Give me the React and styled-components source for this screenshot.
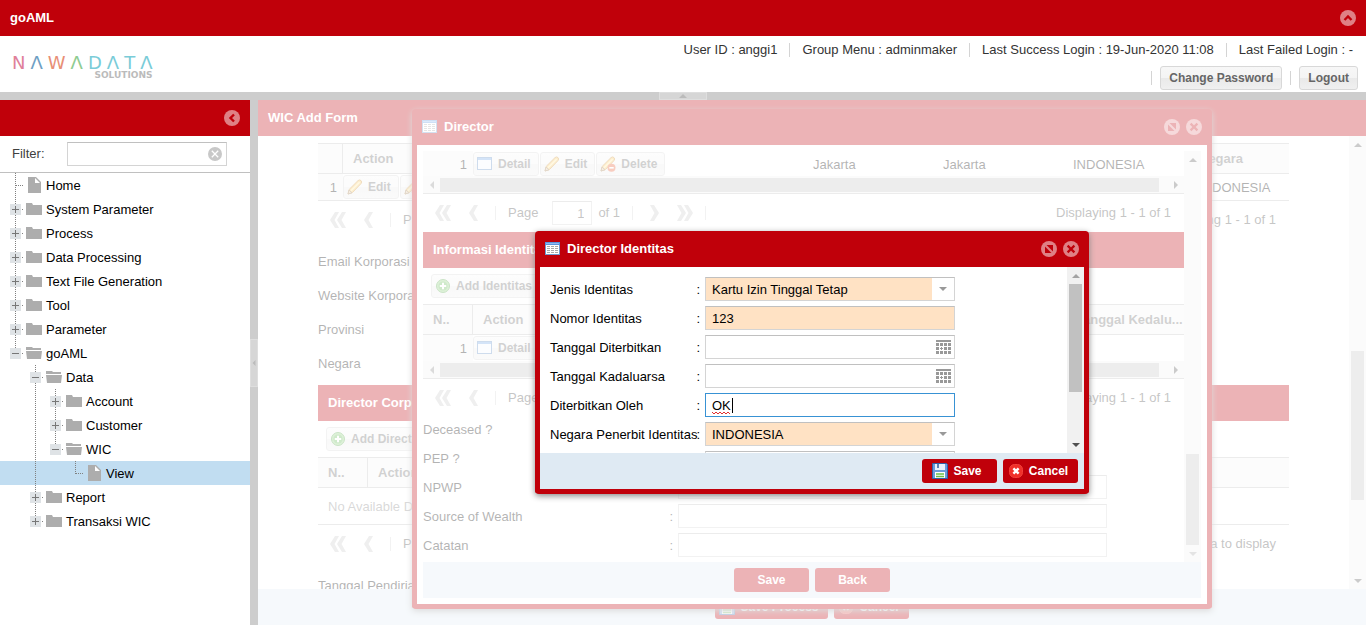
import React from "react";
import styled, { createGlobalStyle, css } from "styled-components";

const RED = "#c0000a";
const LINE = "#c0c0c0";

const GlobalStyle = createGlobalStyle`
  * { box-sizing: border-box; }
  html, body, #root { height: 100%; }
  body {
    margin: 0;
    background: #fff;
    color: #000;
    font: 13px/16px "Liberation Sans", Arial, sans-serif;
    overflow: hidden;
  }
  button, input, select { font: inherit; color: inherit; margin: 0; }
  h1, h2, h3 { margin: 0; font: bold 13px/16px "Liberation Sans", Arial, sans-serif; }
`;

/* ---------- frame ---------- */

const Page = styled.div`
  display: grid;
  grid-template-rows: 36px 56px 8px minmax(0, 1fr);
  height: 100vh;
`;

const TitleBar = styled.header`
  display: flex;
  align-items: center;
  gap: 6px;
  flex: 0 0 36px;
  height: 36px;
  padding: 0 10px;
  background: ${RED};
  color: #fff;
`;

const Title = styled.h2`
  flex: 1;
  color: #fff;
  white-space: nowrap;
`;

const ToolButton = styled.button`
  display: block;
  width: 16px;
  height: 16px;
  padding: 0;
  border: 0;
  background: none;
  svg { display: block; }
`;

const Banner = styled.div`
  display: flex;
  justify-content: space-between;
  background: #fff;
`;

const Logo = styled.div`
  display: flex;
  flex-direction: column;
  align-items: flex-end;
  padding: 19px 0 0 12px;
`;

const LogoWord = styled.div`
  display: flex;
  gap: 5px;
  font: 18px/16px "DejaVu Sans", sans-serif;
`;

const LogoLetter = styled.span`
  color: ${(p) => p.$color};
`;

const LogoSub = styled.div`
  color: #bbb;
  font: bold 9px/8px "DejaVu Sans", sans-serif;
`;

const Account = styled.div`
  display: flex;
  flex-direction: column;
  color: #333;
`;

const AccountLine = styled.div`
  display: flex;
  align-items: center;
  justify-content: flex-end;
  gap: ${(p) => p.$gap}px;
  height: 28px;
  padding-right: ${(p) => p.$end}px;
`;

const Rule = styled.span`
  width: 1px;
  height: 14px;
  background: #d4d4d4;
`;

const Splitter = styled.div`
  display: flex;
  align-items: center;
  justify-content: center;
  flex-direction: ${(p) => (p.$vertical ? "column" : "row")};
  background: #cdcdcd;
`;

const SplitHandle = styled.button`
  display: flex;
  align-items: center;
  justify-content: center;
  width: ${(p) => (p.$vertical ? 8 : 48)}px;
  height: ${(p) => (p.$vertical ? 48 : 8)}px;
  padding: 0;
  border: 1px solid #dedede;
  background: #d6d6d6;
`;

const Main = styled.div`
  display: grid;
  grid-template-columns: 250px 8px minmax(0, 1fr);
  grid-template-rows: minmax(0, 1fr);
`;

/* ---------- navigation ---------- */

const Sidebar = styled.nav`
  background: #fff;
  overflow: hidden;
`;

const FilterBar = styled.div`
  display: flex;
  align-items: center;
  height: 37px;
  padding: 0 12px;
  border-bottom: 1px solid ${LINE};
  color: #404040;
`;

const FilterLabel = styled.label`
  width: 55px;
`;

const FilterBox = styled.div`
  display: flex;
  align-items: center;
  width: 160px;
  height: 24px;
  padding-right: 4px;
  border: 1px solid #d4d4d4;
  border-top-color: ${LINE};
`;

const PlainInput = styled.input`
  flex: 1;
  min-width: 0;
  height: 100%;
  padding: 0 6px;
  border: 0;
  outline: 0;
  background: transparent;
`;

const TreeList = styled.ul`
  margin: 0;
  padding: 0;
  list-style: none;
`;

const TreeRow = styled.li`
  display: flex;
  align-items: center;
  height: 24px;
  padding-left: 5px;
  background: ${(p) => (p.$selected ? "#c1ddf1" : "transparent")};
  svg { flex: none; }
`;

const TreeLink = styled.a`
  margin-left: 4px;
  padding-top: 2px;
  color: #000;
  text-decoration: none;
  white-space: nowrap;
`;

const TreeIndent = styled.span`
  flex: none;
  width: 20px;
`;

const TreeIcon = styled.span`
  display: flex;
  margin-left: 1px;
`;

/* ---------- workspace ---------- */

const Workspace = styled.main`
  position: relative;
  display: flex;
  flex-direction: column;
  overflow: hidden;
`;

const ScrollPane = styled.div`
  display: flex;
  flex: 1;
  min-height: 0;
`;

const FormArea = styled.div`
  flex: 1;
  min-width: 0;
  overflow: hidden;
  padding: ${(p) => p.$pad || "0"};
`;

const FooterBar = styled.footer`
  display: flex;
  align-items: center;
  justify-content: ${(p) => (p.$end ? "flex-end" : "center")};
  gap: 6px;
  flex: 0 0 36px;
  padding: 0 6px;
  background: #dfeaf3;
`;

const Mask = styled.div`
  position: absolute;
  inset: 0;
  z-index: 2;
  background: rgba(255, 255, 255, 0.7);
`;

const ModalLayer = styled.div`
  position: absolute;
  inset: 0;
  z-index: ${(p) => p.$level};
  display: flex;
  align-items: ${(p) => (p.$centered ? "center" : "flex-start")};
  justify-content: center;
  padding-top: ${(p) => (p.$centered ? 0 : 9)}px;
`;

const Dialog = styled.section`
  display: flex;
  flex-direction: column;
  width: ${(p) => p.$width}px;
  max-width: 100%;
  height: ${(p) => p.$height}px;
  max-height: 100%;
  border: 5px solid ${RED};
  border-top: 0;
  border-radius: 4px;
  background: ${RED};
  box-shadow: 0 2px 6px #888;
  ${TitleBar} { padding: 0 5px; background: transparent; }
`;

const DialogBody = styled.div`
  display: flex;
  flex-direction: column;
  flex: 1;
  min-height: 0;
  padding: ${(p) => p.$pad}px;
  background: #fff;
`;

/* ---------- buttons ---------- */

const buttonBase = css`
  display: inline-flex;
  align-items: center;
  justify-content: center;
  gap: 5px;
  height: 24px;
  border-radius: 3px;
  font: bold 12px/16px "Liberation Sans", Arial, sans-serif;
  white-space: nowrap;
  svg { flex: none; }
`;

const ActionButton = styled.button`
  ${buttonBase}
  min-width: 75px;
  padding: ${(p) => (p.$icon ? "0 9px 0 4px" : "0 8px")};
  border: 0;
  background: ${RED};
  color: #fff;
`;

const GreyButton = styled.button`
  ${buttonBase}
  padding: ${(p) => (p.$icon ? "0 7px 0 3px" : "0 8px")};
  border: 1px solid #d8d8d8;
  background: linear-gradient(#f7f7f7, #f4f4f4 49%, #e9e9e9 50%, #f0f0f0);
  color: #666;
`;

/* ---------- grids ---------- */

const PanelTitle = styled.h3`
  height: 36px;
  margin-top: ${(p) => (p.$spaced ? 5 : 0)}px;
  padding: 10px;
  background: ${RED};
  color: #fff;
  line-height: 16px;
`;

const GridTools = styled.div`
  display: flex;
  align-items: center;
  height: 36px;
  padding: 0 8px;
`;

const Grid = styled.table`
  width: 100%;
  table-layout: fixed;
  border-collapse: separate;
  border-spacing: 0;
`;

const HeadCell = styled.th`
  height: 31px;
  padding: 0 0 0 10px;
  border-top: 1px solid ${LINE};
  border-bottom: 1px solid ${LINE};
  border-right: ${(p) => (p.$ruled ? "1px solid " + LINE : "0")};
  background: #f5f5f5;
  color: #666;
  text-align: left;
  white-space: nowrap;
  overflow: hidden;
`;

const Cell = styled.td`
  height: ${(p) => p.$height || 25}px;
  padding: ${(p) => (p.$flush ? "0" : "2px 0 0 10px")};
  border-bottom: ${(p) => (p.$closed ? "1px solid " + LINE : "0")};
  color: ${(p) => (p.$muted ? "#808080" : "#000")};
  white-space: nowrap;
`;

const NumberCell = styled(Cell)`
  padding: 2px 6px 0 0;
  background: #f6f6f6;
  text-align: right;
`;

const CellButtons = styled.div`
  display: flex;
  gap: 1px;
  overflow: hidden;
`;

const PagerBar = styled.div`
  display: flex;
  align-items: center;
  height: 38px;
  padding: 0 13px 0 12px;
  color: #404040;
  white-space: nowrap;
`;

const PagerButton = styled.button`
  display: flex;
  justify-content: center;
  width: ${(p) => (p.$wide ? 16 : 10)}px;
  padding: 0;
  border: 0;
  margin-right: ${(p) => p.$after}px;
  background: none;
`;

const PagerRule = styled(Rule)`
  margin-right: ${(p) => p.$after}px;
`;

const PageBox = styled.input`
  width: 40px;
  height: 24px;
  margin: 0 6px 0 14px;
  padding: 0 7px 0 0;
  border: 1px solid #d4d4d4;
  border-top-color: ${LINE};
  text-align: right;
`;

const PageCount = styled.span`
  width: 34px;
`;

const PagerInfo = styled.span`
  margin-left: auto;
`;

/* ---------- scroll bars ---------- */

const ScrollTrack = styled.div`
  display: flex;
  flex: none;
  align-items: stretch;
  background: #f1f1f1;
  ${(p) => (p.$across
    ? css`
        flex-direction: row;
        height: 18px;
        padding: 2px 0 1px;
        border-bottom: 1px solid ${LINE};
      `
    : css`
        flex-direction: column;
        width: 17px;
        padding: 0 2px;
      `)}
`;

const ScrollArrow = styled.span`
  flex: 0 0 17px;
  display: flex;
  align-items: center;
  justify-content: center;
`;

const ScrollGap = styled.span`
  flex: ${(p) => p.$share} 1 0;
`;

const ScrollThumb = styled.span`
  flex: ${(p) => p.$share} 1 0;
  background: #c1c1c1;
`;

/* ---------- form fields ---------- */

const TallLabel = styled.label`
  display: flex;
  align-items: center;
  height: 34px;
  padding-top: 2px;
`;

const LabelGroup = styled.div`
  margin-top: 5px;
`;

const FieldStack = styled.div`
  display: flex;
  flex-direction: column;
  gap: 5px;
`;

const FieldRow = styled.div`
  display: flex;
  gap: 5px;
  width: ${(p) => p.$width}px;
  max-width: 100%;
  height: 24px;
`;

const FieldLabel = styled.label`
  display: flex;
  align-items: center;
  justify-content: space-between;
  flex: 0 0 ${(p) => p.$width}px;
  min-width: 0;
  padding-top: 2px;
  white-space: nowrap;
`;

const LabelText = styled.span`
  min-width: 0;
`;

const CheckArea = styled.div`
  display: flex;
  align-items: center;
  flex: 1;
`;

const FieldBox = styled.div`
  position: relative;
  display: flex;
  align-items: center;
  flex: 1;
  min-width: 0;
  border: 1px solid ${(p) => (p.$focused ? "#3892d4" : "#d4d4d4")};
  border-top-color: ${(p) => (p.$focused ? "#3892d4" : LINE)};
  background: ${(p) => (p.$required ? "#ffe2c4" : "#fff")};
`;

const PlainSelect = styled.select`
  flex: 1;
  min-width: 0;
  height: 100%;
  padding: 2px 6px 0;
  border: 0;
  outline: 0;
  background: transparent;
  appearance: none;
`;

const Trigger = styled.span`
  display: flex;
  align-items: center;
  justify-content: center;
  width: 22px;
  height: 100%;
  background: #fff;
`;

const DateButton = styled.button`
  display: flex;
  align-items: center;
  justify-content: center;
  width: 22px;
  height: 100%;
  padding: 0;
  border: 0;
  background: #fff;
`;

const SpellMark = styled.svg`
  position: absolute;
  left: 6px;
  top: 3px;
  pointer-events: none;
`;

/* ---------- icons ---------- */

const CircleTool = ({ label, children }) => (
  <ToolButton type="button" aria-label={label}>
    <svg width="16" height="16" viewBox="0 0 16 16">
      <circle cx="8" cy="8" r="8" fill="#df8085" />
      {children}
    </svg>
  </ToolButton>
);

const CloseTool = () => (
  <CircleTool label="Close">
    <path d="M4.600 4.600l6.800 6.800M11.400 4.600l-6.800 6.800" stroke={RED} strokeWidth="2.200" />
  </CircleTool>
);

const MaximizeTool = () => (
  <CircleTool label="Maximize">
    <path d="M4 4h8v8h-8z" fill={RED} />
    <path d="M4 4l8 8" stroke="#df8085" strokeWidth="2.200" />
  </CircleTool>
);

const ChevronTool = ({ label, up }) => (
  <CircleTool label={label}>
    <path
      d={up ? "M4.500 10L8 6.500L11.500 10" : "M10 4.500L6.500 8L10 11.500"}
      fill="none"
      stroke={RED}
      strokeWidth="2.400"
    />
  </CircleTool>
);

const TableIcon = () => (
  <svg width="16" height="16" viewBox="0 0 16 16">
    <rect x="0.500" y="1.500" width="14" height="12" fill="#fff" stroke="#6f9bd0" />
    <rect x="0" y="1" width="15" height="3" fill="#5b93dc" />
    <rect x="1" y="2" width="13" height="1" fill="#8dbaf0" />
    <path
      d="M2 5.500h11M2 7.500h11M2 9.500h11M2 11.500h11"
      stroke="#a9a9a9"
      strokeDasharray="3 1"
    />
  </svg>
);

const WindowIcon = () => (
  <svg width="16" height="16" viewBox="0 0 16 16">
    <rect x="0.500" y="1.500" width="14" height="12" fill="#f4f8fd" stroke="#5b8bc4" />
    <rect x="1" y="2" width="13" height="2" fill="#6ea4e6" />
  </svg>
);

const PencilIcon = ({ remove }) => (
  <svg width="16" height="16" viewBox="0 0 16 16">
    <path d="M1 15l1.200-4.600L11 1.600q1.600-1.400 3 0t0 3L5.400 13.600z" fill="#f7c65a" stroke="#c98a2c" />
    <path d="M4 11.800L12.600 3.200" stroke="#ffeaa8" strokeWidth="1.400" />
    <path d="M1 15l1-4 3 2.800z" fill="#e7c9a0" stroke="#8a6a43" strokeWidth="0.800" />
    {remove && (
      <>
        <circle cx="11.500" cy="11.800" r="4" fill="#e8582e" />
        <path d="M9.300 11.800h4.400" stroke="#fff" strokeWidth="1.600" />
      </>
    )}
  </svg>
);

const AddIcon = () => (
  <svg width="16" height="16" viewBox="0 0 16 16">
    <circle cx="8" cy="8" r="6.500" fill="#8fd07e" stroke="#4fa343" />
    <circle cx="8" cy="8" r="4.600" fill="#5fb750" />
    <path d="M8 4.800v6.400M4.800 8h6.400" stroke="#fff" strokeWidth="2" />
  </svg>
);

const DiskIcon = () => (
  <svg width="16" height="16" viewBox="0 0 16 16">
    <path d="M0.500 0.500h14l1 1v14H0.500z" fill="#6c9bdc" stroke="#2f62a8" />
    <rect x="3" y="1" width="10" height="6" fill="#e9f1fb" />
    <rect x="5" y="1" width="2" height="4" fill="#5a7fb4" />
    <rect x="3" y="9" width="10" height="6" fill="#fff" />
    <path d="M4 11h8M4 13.500h8" stroke="#6cc04a" strokeWidth="1.600" />
  </svg>
);

const CancelIcon = () => (
  <svg width="16" height="16" viewBox="0 0 16 16">
    <rect x="1.500" y="1.500" width="13" height="13" rx="5" fill="#f0302a" stroke="#f4403a" />
    <path d="M5.400 5.400l5.200 5.200M10.600 5.400l-5.200 5.200" stroke="#fff" strokeWidth="2.400" />
  </svg>
);

const CalendarIcon = () => (
  <svg width="15" height="14" viewBox="0 0 15 14" fill="#999">
    <rect width="15" height="2" />
    {[3, 7, 11].map((y) =>
      [0, 4, 8, 12].map((x) => <rect key={x + "-" + y} x={x} y={y} width="3" height="3" />)
    )}
    <path d="M4 7h1v1H4zM6 7h1v1H6zM4 9h1v1H4zM6 9h1v1H6z" fill="#fff" />
  </svg>
);

const ClearIcon = () => (
  <svg width="14" height="14" viewBox="0 0 14 14">
    <circle cx="7" cy="7" r="7" fill="#c8c8c8" />
    <path d="M3.800 3.800l6.400 6.400M10.200 3.800l-6.400 6.400" stroke="#fff" strokeWidth="1.300" />
  </svg>
);

const arrowShapes = {
  up: "M0 6L4 2L8 6z",
  down: "M0 2L8 2L4 6z",
  left: "M6 0L2 4L6 8z",
  right: "M2 0L6 4L2 8z",
};

const Arrow = ({ way, color = "#999" }) => (
  <svg width="8" height="8" viewBox="0 0 8 8">
    <path d={arrowShapes[way]} fill={color} />
  </svg>
);

const PagerGlyph = ({ double, forward }) => {
  const width = double ? 16 : 10;
  return (
    <svg width={width} height="16" viewBox={`0 0 ${width} 16`}>
      <g transform={forward ? `translate(${width} 0) scale(-1 1)` : undefined} fill="#c8c8c8">
        <path d="M5 0h4L4.500 8L9 16H5L0 8z" />
        {double && <path d="M12 0h4L11.500 8L16 16H12L7 8z" />}
      </g>
    </svg>
  );
};

const FolderIcon = ({ open }) => (
  <svg width="16" height="16" viewBox="0 0 16 16" fill="#adadad">
    {open ? (
      <path d="M0 2h6l1 1h8v2H0zM0 6h16l-1 8H1z" />
    ) : (
      <path d="M0 2h6l1 2h9v10H0z" />
    )}
  </svg>
);

const FileIcon = () => (
  <svg width="16" height="16" viewBox="0 0 16 16">
    <path d="M2 0h8l5 5v11H2z" fill="#adadad" />
    <path d="M9 1v5h5z" fill="#fff" />
  </svg>
);

const Elbow = ({ mark, last, line }) => (
  <svg width="20" height="24" viewBox="0 0 20 24">
    <path d={last ? "M10.500 0V13" : "M10.500 0V24"} stroke="#808080" strokeDasharray="1 1" />
    {!line && <path d="M11 12.500H19" stroke="#808080" strokeDasharray="1 1" />}
    {mark && <rect x="5" y="7" width="11" height="11" fill="#dfe3e6" />}
    {mark && <path d="M7 12.500h7" stroke="#777" />}
    {mark === "plus" && <path d="M10.500 9v7" stroke="#777" />}
  </svg>
);

/* ---------- composed parts ---------- */

const logoLetters = [
  ["N", "#e0809a"], ["Λ", "#6f9fc4"], ["W", "#e88f76"], ["Λ", "#8fcc92"],
  ["D", "#7accd8"], ["Λ", "#7accd8"], ["T", "#7accd8"], ["Λ", "#7accd8"],
];

// trail: for each outer level, whether its connector line runs past this row
const treeNodes = [
  { name: "Home", file: true },
  { name: "System Parameter", mark: "plus" },
  { name: "Process", mark: "plus" },
  { name: "Data Processing", mark: "plus" },
  { name: "Text File Generation", mark: "plus" },
  { name: "Tool", mark: "plus" },
  { name: "Parameter", mark: "plus" },
  { name: "goAML", mark: "minus", last: true },
  { name: "Data", mark: "minus", trail: [false] },
  { name: "Account", mark: "plus", trail: [false, true] },
  { name: "Customer", mark: "plus", trail: [false, true] },
  { name: "WIC", mark: "minus", last: true, trail: [false, true] },
  { name: "View", file: true, last: true, selected: true, trail: [false, true, false] },
  { name: "Report", mark: "plus", trail: [false] },
  { name: "Transaksi WIC", mark: "plus", last: true, trail: [false] },
];

const TreeNode = ({ node }) => (
  <TreeRow $selected={node.selected}>
    {(node.trail || []).map((line, i) => (line ? <Elbow key={i} line /> : <TreeIndent key={i} />))}
    <Elbow mark={node.mark} last={node.last} />
    <TreeIcon>{node.file ? <FileIcon /> : <FolderIcon open={node.mark === "minus"} />}</TreeIcon>
    <TreeLink href="#">{node.name}</TreeLink>
  </TreeRow>
);

const ScrollBar = ({ across, before, thumb, after, startColor, endColor }) => (
  <ScrollTrack $across={across} aria-hidden="true">
    <ScrollArrow><Arrow way={across ? "left" : "up"} color={startColor} /></ScrollArrow>
    <ScrollGap $share={before} />
    <ScrollThumb $share={thumb} />
    <ScrollGap $share={after} />
    <ScrollArrow><Arrow way={across ? "right" : "down"} color={endColor} /></ScrollArrow>
  </ScrollTrack>
);

const Pager = ({ info }) => (
  <PagerBar>
    <PagerButton type="button" aria-label="First page" $wide $after={18}><PagerGlyph double /></PagerButton>
    <PagerButton type="button" aria-label="Previous page" $after={16}><PagerGlyph /></PagerButton>
    <PagerRule $after={12} />
    <span>Page</span>
    <PageBox aria-label="Page number" defaultValue="1" />
    <PageCount>of 1</PageCount>
    <PagerRule $after={16} />
    <PagerButton type="button" aria-label="Next page" $after={18}><PagerGlyph forward /></PagerButton>
    <PagerButton type="button" aria-label="Last page" $wide $after={12}><PagerGlyph double forward /></PagerButton>
    <Rule />
    <PagerInfo>{info}</PagerInfo>
  </PagerBar>
);

const RowButtons = ({ detail }) => (
  <CellButtons>
    {detail && <GreyButton type="button" $icon><WindowIcon />Detail</GreyButton>}
    <GreyButton type="button" $icon><PencilIcon />Edit</GreyButton>
    <GreyButton type="button" $icon><PencilIcon remove />Delete</GreyButton>
  </CellButtons>
);

const Field = ({ id, label, labelWidth, width, required, focused, check, children }) => (
  <FieldRow $width={width}>
    <FieldLabel htmlFor={id} $width={labelWidth}>
      <LabelText>{label}</LabelText>
      <span>:</span>
    </FieldLabel>
    {check
      ? <CheckArea>{children}</CheckArea>
      : <FieldBox $required={required} $focused={focused}>{children}</FieldBox>}
  </FieldRow>
);

const IdentityField = (props) => <Field labelWidth={150} width={405} {...props} />;
const DirectorField = (props) => <Field labelWidth={250} width={684} {...props} />;

const Combo = ({ id, value }) => (
  <>
    <PlainSelect id={id} defaultValue={value}><option>{value}</option></PlainSelect>
    <Trigger><Arrow way="down" /></Trigger>
  </>
);

const DateField = ({ id, label }) => (
  <IdentityField id={id} label={label}>
    <PlainInput id={id} />
    <DateButton type="button" aria-label={"Pick " + label}><CalendarIcon /></DateButton>
  </IdentityField>
);

const WicForm = () => (
  <>
    <TitleBar as="div"><Title>WIC Add Form</Title></TitleBar>
    <ScrollPane>
      <FormArea $pad="7px 60px 0">
        <Grid>
          <colgroup><col width="25" /><col /><col width="100" /></colgroup>
          <thead>
            <tr><HeadCell $ruled /><HeadCell>Action</HeadCell><HeadCell>Negara</HeadCell></tr>
          </thead>
          <tbody>
            <tr>
              <NumberCell $height={27} $closed>1</NumberCell>
              <Cell $height={27} $closed $flush><RowButtons /></Cell>
              <Cell $height={27} $closed>INDONESIA</Cell>
            </tr>
          </tbody>
        </Grid>
        <Pager info="Displaying 1 - 1 of 1" />
        <LabelGroup>
          {["Email Korporasi", "Website Korporasi", "Provinsi", "Negara"].map((t) => (
            <TallLabel key={t}>{t}</TallLabel>
          ))}
        </LabelGroup>
        <PanelTitle $spaced>Director Corp</PanelTitle>
        <GridTools>
          <GreyButton type="button" $icon><AddIcon />Add Director</GreyButton>
        </GridTools>
        <Grid>
          <colgroup><col width="50" /><col /></colgroup>
          <thead>
            <tr><HeadCell $ruled>N..</HeadCell><HeadCell>Action</HeadCell></tr>
          </thead>
          <tbody>
            <tr><Cell colSpan={2} $height={37} $closed $muted>No Available Data</Cell></tr>
          </tbody>
        </Grid>
        <Pager info="No data to display" />
        <LabelGroup><TallLabel>Tanggal Pendirian</TallLabel></LabelGroup>
      </FormArea>
      <ScrollBar before={198} thumb={149} after={72} startColor="#505050" endColor="#505050" />
    </ScrollPane>
    <FooterBar>
      <ActionButton type="button" $icon><DiskIcon />Save Process</ActionButton>
      <ActionButton type="button" $icon><CancelIcon />Cancel</ActionButton>
    </FooterBar>
  </>
);

const DirectorDialog = () => (
  <Dialog role="dialog" aria-label="Director" $width={800} $height={500}>
    <TitleBar as="div"><TableIcon /><Title>Director</Title><MaximizeTool /><CloseTool /></TitleBar>
    <DialogBody $pad={6}>
      <ScrollPane>
        <FormArea>
          <Grid>
            <colgroup><col width="50" /><col width="330" /><col width="130" /><col width="130" /><col /></colgroup>
            <tbody>
              <tr>
                <NumberCell>1</NumberCell>
                <Cell $flush><RowButtons detail /></Cell>
                <Cell>Jakarta</Cell>
                <Cell>Jakarta</Cell>
                <Cell>INDONESIA</Cell>
              </tr>
            </tbody>
          </Grid>
          <ScrollBar across before={0} thumb={719} after={8} startColor="#888" endColor="#505050" />
          <Pager info="Displaying 1 - 1 of 1" />
          <PanelTitle>Informasi Identitas</PanelTitle>
          <GridTools>
            <GreyButton type="button" $icon><AddIcon />Add Identitas</GreyButton>
          </GridTools>
          <Grid>
            <colgroup><col width="50" /><col /><col width="118" /></colgroup>
            <thead>
              <tr><HeadCell $ruled>N..</HeadCell><HeadCell>Action</HeadCell><HeadCell>Tanggal Kedalu...</HeadCell></tr>
            </thead>
            <tbody>
              <tr>
                <NumberCell $height={26}>1</NumberCell>
                <Cell $height={26} $flush><RowButtons detail /></Cell>
                <Cell $height={26} />
              </tr>
            </tbody>
          </Grid>
          <ScrollBar across before={0} thumb={719} after={8} startColor="#888" endColor="#505050" />
          <Pager info="Displaying 1 - 1 of 1" />
          <FieldStack>
            <DirectorField id="deceased" label="Deceased ?" check><input type="checkbox" id="deceased" /></DirectorField>
            <DirectorField id="pep" label="PEP ?" check><input type="checkbox" id="pep" /></DirectorField>
            <DirectorField id="npwp" label="NPWP"><PlainInput id="npwp" /></DirectorField>
            <DirectorField id="wealth" label="Source of Wealth"><PlainInput id="wealth" /></DirectorField>
            <DirectorField id="note" label="Catatan"><PlainInput id="note" /></DirectorField>
          </FieldStack>
        </FormArea>
        <ScrollBar before={286} thumb={91} after={0} startColor="#505050" endColor="#a3a3a3" />
      </ScrollPane>
      <FooterBar>
        <ActionButton type="button">Save</ActionButton>
        <ActionButton type="button">Back</ActionButton>
      </FooterBar>
    </DialogBody>
  </Dialog>
);

const IdentityDialog = () => (
  <Dialog role="dialog" aria-label="Director Identitas" $width={554} $height={263}>
    <TitleBar as="div"><TableIcon /><Title>Director Identitas</Title><MaximizeTool /><CloseTool /></TitleBar>
    <DialogBody $pad={0}>
      <ScrollPane>
        <FormArea $pad="10px 10px 0">
          <FieldStack>
            <IdentityField id="kind" label="Jenis Identitas" required>
              <Combo id="kind" value="Kartu Izin Tinggal Tetap" />
            </IdentityField>
            <IdentityField id="number" label="Nomor Identitas" required>
              <PlainInput id="number" defaultValue="123" />
            </IdentityField>
            <DateField id="issued" label="Tanggal Diterbitkan" />
            <DateField id="expires" label="Tanggal Kadaluarsa" />
            <IdentityField id="issuer" label="Diterbitkan Oleh" focused>
              <PlainInput id="issuer" defaultValue="OK" />
              <SpellMark width="22" height="18" viewBox="0 0 22 18">
                <path d="M0 15l2 2l2-2l2 2l2-2l2 2l2-2l2 2l2-2l2 2" fill="none" stroke="#e03030" />
                <path d="M20.500 1v15" stroke="#000" />
              </SpellMark>
            </IdentityField>
            <IdentityField id="country" label="Negara Penerbit Identitas" required>
              <Combo id="country" value="INDONESIA" />
            </IdentityField>
            <IdentityField id="remark" label=""><PlainInput id="remark" aria-label="Remark" /></IdentityField>
          </FieldStack>
        </FormArea>
        <ScrollBar before={0} thumb={107} after={44} startColor="#a3a3a3" endColor="#505050" />
      </ScrollPane>
      <FooterBar $end>
        <ActionButton type="button" $icon><DiskIcon />Save</ActionButton>
        <ActionButton type="button" $icon><CancelIcon />Cancel</ActionButton>
      </FooterBar>
    </DialogBody>
  </Dialog>
);

export default function App() {
  return (
    <Page>
      <GlobalStyle />
      <TitleBar><Title as="h1">goAML</Title><ChevronTool label="Collapse header" up /></TitleBar>
      <Banner>
        <Logo aria-label="Nawadata Solutions">
          <LogoWord>
            {logoLetters.map(([letter, color], i) => <LogoLetter key={i} $color={color}>{letter}</LogoLetter>)}
          </LogoWord>
          <LogoSub>SOLUTIONS</LogoSub>
        </Logo>
        <Account>
          <AccountLine $gap={12} $end={13}>
            <span>User ID : anggi1</span><Rule />
            <span>Group Menu : adminmaker</span><Rule />
            <span>Last Success Login : 19-Jun-2020 11:08</span><Rule />
            <span>Last Failed Login : -</span>
          </AccountLine>
          <AccountLine $gap={8} $end={8}>
            <Rule /><GreyButton type="button">Change Password</GreyButton>
            <Rule /><GreyButton type="button">Logout</GreyButton>
          </AccountLine>
        </Account>
      </Banner>
      <Splitter>
        <SplitHandle type="button" aria-label="Collapse banner"><Arrow way="up" color="#bbb" /></SplitHandle>
      </Splitter>
      <Main>
        <Sidebar>
          <TitleBar as="div"><Title as="span" /><ChevronTool label="Collapse menu" /></TitleBar>
          <FilterBar>
            <FilterLabel htmlFor="filter">Filter:</FilterLabel>
            <FilterBox>
              <PlainInput id="filter" />
              <ClearIcon />
            </FilterBox>
          </FilterBar>
          <TreeList>
            {treeNodes.map((node) => <TreeNode key={node.name} node={node} />)}
          </TreeList>
        </Sidebar>
        <Splitter $vertical>
          <SplitHandle type="button" aria-label="Collapse sidebar" $vertical><Arrow way="left" color="#bbb" /></SplitHandle>
        </Splitter>
        <Workspace>
          <WicForm />
          <ModalLayer $level={1}><DirectorDialog /></ModalLayer>
          <Mask />
          <ModalLayer $level={3} $centered><IdentityDialog /></ModalLayer>
        </Workspace>
      </Main>
    </Page>
  );
}
